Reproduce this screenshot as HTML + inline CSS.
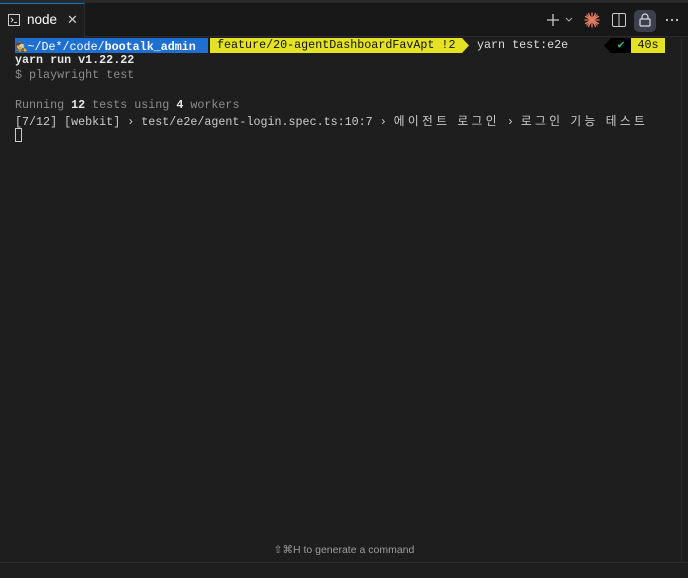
<!DOCTYPE html>
<html><head><meta charset="utf-8"><style>
*{margin:0;padding:0;box-sizing:border-box}
body{width:688px;height:578px;background:#1e1e1e;position:relative;overflow:hidden;font-family:"Liberation Mono","Noto Sans CJK KR",monospace;font-size:11.7px;color:#cccccc}
.top{position:absolute;left:0;top:0;width:688px;height:37px;background:#181818;border-bottom:1px solid #2b2b2b}
.topline{position:absolute;left:0;top:0;width:688px;height:3px;background:#2a2a2a}
.tab{position:absolute;left:0;top:3px;width:85px;height:35px;background:#1e1e1e;border-right:1px solid #2b2b2b;border-top:1px solid #0078d4}
.tab .t{position:absolute;left:27px;top:8px;font-family:"Liberation Sans",sans-serif;font-size:13.5px;color:#fff}
.tab .x{position:absolute;left:67px;top:8px;font-family:"Liberation Sans",sans-serif;font-size:13px;color:#ccc}
.ln{position:absolute;left:15px;white-space:pre;height:15px;line-height:15px}
.b{font-weight:bold;color:#e8e8e8}
.g{color:#8c8c8c}
.k{letter-spacing:3.4px;font-family:"Noto Sans CJK KR",sans-serif}
.seg{position:absolute;top:38px;height:15px;line-height:15px;white-space:pre}
.hint{position:absolute;top:544px;left:0;width:688px;text-align:center;font-family:"Liberation Sans",sans-serif;font-size:10.5px;color:#9d9d9d}
</style></head><body>
<div class="top"><div class="topline"></div></div>
<div class="tab">
<svg style="position:absolute;left:8px;top:10px" width="12" height="12" viewBox="0 0 12 12"><rect x="0.5" y="0.5" width="11" height="11" fill="none" stroke="#ccc" stroke-width="1"/><path d="M3 4l2 2-2 2M6 8.5h3" stroke="#ccc" fill="none"/></svg>
<span class="t">node</span><span class="x">✕</span></div>
<svg style="position:absolute;left:546px;top:13px" width="14" height="14"><path d="M7 1v12M1 7h12" stroke="#ccc" stroke-width="1.3"/></svg>
<svg style="position:absolute;left:565px;top:17px" width="8" height="6"><path d="M1 1l3 3 3-3" stroke="#aaa" fill="none"/></svg>
<svg style="position:absolute;left:584px;top:12px" width="16" height="16" viewBox="0 0 16 16"><g stroke="#e07a5f" stroke-width="1.3" stroke-linecap="round"><path d="M8 1v14M1 8h14M3 3l10 10M13 3L3 13M4.5 1.5l7 13M11.5 1.5l-7 13M1.5 4.5l13 7M1.5 11.5l13-7"/></g><circle cx="8" cy="8" r="2" fill="#e07a5f"/></svg>
<svg style="position:absolute;left:612px;top:13px" width="14" height="14"><rect x="0.5" y="0.5" width="13" height="13" rx="1.5" fill="none" stroke="#ccc"/><path d="M7 1v12" stroke="#ccc"/></svg>
<div style="position:absolute;left:634px;top:10px;width:22px;height:22px;border-radius:5px;background:#3c3f4d"></div>
<svg style="position:absolute;left:638px;top:12px" width="14" height="16"><path d="M4 7V5a3 3 0 016 0v2" stroke="#ddd" fill="none" stroke-width="1.2"/><rect x="2" y="7" width="10" height="7" rx="1" fill="none" stroke="#ddd" stroke-width="1.2"/></svg>
<svg style="position:absolute;left:665px;top:18px" width="14" height="4"><circle cx="2" cy="2" r="1.1" fill="#ccc"/><circle cx="7" cy="2" r="1.1" fill="#ccc"/><circle cx="12" cy="2" r="1.1" fill="#ccc"/></svg>
<div style="position:absolute;left:681px;top:38px;width:1px;height:524px;background:#2b2b2b"></div>

<div class="seg" style="left:15px;width:193px;background:#1f6fd1;color:#fff"><span style="font-family:'Noto Sans CJK KR';font-size:10px">🕵</span><span>~/De*/code/</span><b>bootalk_admin</b></div>
<div class="seg" style="left:210px;width:252px;background:#e3e324;color:#111;padding-left:7px">feature/20-agentDashboardFavApt !2</div>
<svg style="position:absolute;left:462px;top:38px" width="8" height="15"><path d="M0 0L7 7.5 0 15z" fill="#e3e324"/></svg>
<div class="seg" style="left:477px;color:#ddd">yarn test:e2e</div>
<svg style="position:absolute;left:604px;top:38px" width="7" height="15"><path d="M7 0L0 7.5 7 15z" fill="#000"/></svg>
<div class="seg" style="left:611px;width:20px;background:#000;color:#2ec27e;text-align:center">✔</div>
<div class="seg" style="left:631px;width:34px;background:#e3e324;color:#111;text-align:center">40s</div>

<div class="ln b" style="top:53px">yarn run v1.22.22</div>
<div class="ln g" style="top:68px">$ playwright test</div>
<div class="ln g" style="top:98px">Running <span class="b">12</span> tests using <span class="b">4</span> workers</div>
<div class="ln" style="top:113px">[7/12] [webkit] › test/e2e/agent-login.spec.ts:10:7 › <span class="k">에이전트</span> <span class="k">로그인</span> › <span class="k">로그인</span> <span class="k">기능</span> <span class="k">테스트</span></div>
<div style="position:absolute;left:15px;top:128px;width:7px;height:14px;border:1px solid #ccc"></div>

<div class="hint">⇧⌘H to generate a command</div>
<div style="position:absolute;left:0;top:562px;width:688px;height:1px;background:#2b2b2b"></div>
</body></html>
